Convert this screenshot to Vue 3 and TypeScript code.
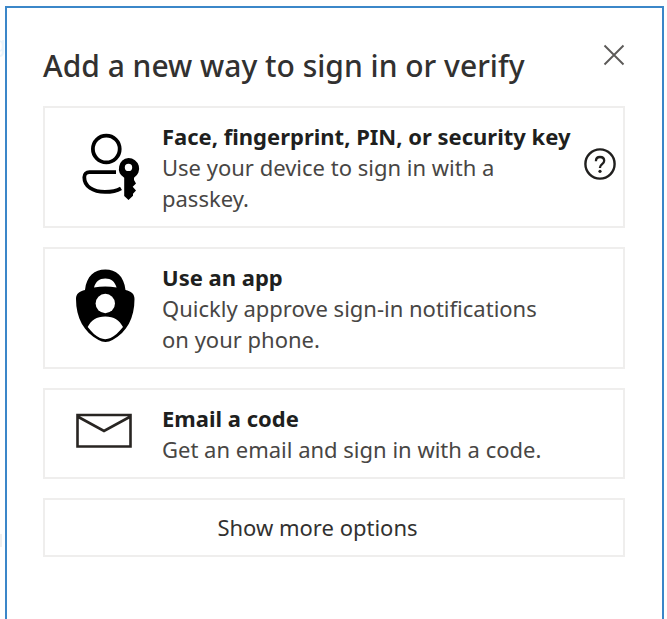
<script setup lang="ts">
import { ref } from 'vue'

type IconName = 'passkey' | 'authenticator' | 'mail'

interface Method {
  icon: IconName
  title: string
  description: string
  help?: boolean
}

const methods: Method[] = [
  {
    icon: 'passkey',
    title: 'Face, fingerprint, PIN, or security key',
    description: 'Use your device to sign in with a passkey.',
    help: true,
  },
  {
    icon: 'authenticator',
    title: 'Use an app',
    description: 'Quickly approve sign-in notifications on your phone.',
  },
  {
    icon: 'mail',
    title: 'Email a code',
    description: 'Get an email and sign in with a code.',
  },
]

const selected = ref<IconName | null>(null)
</script>

<template>
  <div class="page">
    <span class="behind behind-text" aria-hidden="true">g</span>
    <span class="behind behind-bar" aria-hidden="true"></span>
    <main class="dialog" role="dialog" aria-labelledby="dialog-title">
      <header class="header">
        <h1 id="dialog-title">Add a new way to sign in or verify</h1>
        <button class="close" type="button" aria-label="Close">
          <svg width="22" height="22" viewBox="0 0 22 22">
            <path d="M1.5 1.5 20.5 20.5M20.5 1.5 1.5 20.5" fill="none" stroke="#5c5a58" stroke-width="1.9" />
          </svg>
        </button>
      </header>

      <ul class="methods">
        <li v-for="m in methods" :key="m.icon" class="card">
          <button class="method" type="button" @click="selected = m.icon">
            <span class="icon">
              <svg v-if="m.icon === 'passkey'" width="80" height="85" viewBox="-5 0 80 85">
                <g fill="none" stroke="#000" stroke-width="3.8">
                  <circle cx="36.3" cy="24" r="13.4" />
                  <path d="M46 47.1H19.5C16.2 47.1 14.3 49.2 14.3 52.2C14.3 61.5 23 66.900 35 66.900C41.5 66.900 47 65.700 51 63.300" />
                </g>
                <path
                  fill="#000"
                  fill-rule="evenodd"
                  d="M58.500 33A10.600 10.600 0 0 1 64 52.700V55L66 58.500L62.700 61.800L66 65.500L63 68.800V70.800L58.500 75L54.200 71V52.700A10.600 10.600 0 0 1 58.500 33ZM58.500 38.700A3.700 3.700 0 1 0 58.500 46.100A3.700 3.700 0 1 0 58.500 38.700Z"
                />
              </svg>
              <svg v-else-if="m.icon === 'authenticator'" width="80" height="96" viewBox="0 0 80 96">
                <path
                  fill="#000"
                  d="M40.300 8.500C51 8.500 59 15 60.500 29C66 30.500 69.500 32.300 69.500 38C69.500 57 62 71 47.500 79C43 81.500 38 81.500 33.500 79C19 71 11 57 11 38C11 32.300 14.500 30.500 20 29C21.500 15 29.500 8.500 40.300 8.500Z"
                />
                <path fill="#fff" d="M29 26.500C30.500 20.700 34.500 17.500 40.300 17.500S50 20.700 51.600 26.500C44 25 36.500 25 29 26.500Z" />
                <circle cx="40.300" cy="42.500" r="9.700" fill="#fff" />
                <path fill="#fff" d="M22.700 66C26 59.500 31.500 55.500 40.300 55.500S54.500 59.500 58 66C53.500 71.500 49.500 75.300 45.500 77C42 78.500 38.500 78.500 35 77C31 75.300 27 71.500 22.700 66Z" />
              </svg>
              <svg v-else width="80" height="66" viewBox="0 0 80 66">
                <path d="M12.500 14H65.500V45.500H12.500ZM12.500 15.500 39 30 65.500 15.500" fill="none" stroke="#282522" stroke-width="2.600" />
              </svg>
            </span>
            <span class="text">
              <strong>{{ m.title }}</strong>
              <span class="description">{{ m.description }}</span>
            </span>
          </button>
          <button v-if="m.help" class="help" type="button" aria-label="Learn more about passkeys">
            <svg width="34" height="34" viewBox="0 0 34 34">
              <circle cx="17" cy="17" r="14.600" fill="none" stroke="#201f1e" stroke-width="2.400" />
              <path d="M12.900 14.300C12.900 11.500 14.600 10 17 10S21.200 11.500 21.200 13.800C21.200 17 17 17.200 17 20.500V21" fill="none" stroke="#201f1e" stroke-width="2.300" />
              <circle cx="17" cy="24.300" r="1.600" fill="#201f1e" />
            </svg>
          </button>
        </li>
      </ul>

      <button class="more" type="button">Show more options</button>
    </main>
  </div>
</template>

<style>
body {
  margin: 0;
  background: #fff;
}
</style>

<style scoped>
.page {
  position: relative;
  box-sizing: border-box;
  min-height: 100vh;
  padding: 6px 3px 0 5px;
  overflow: hidden;
  background: #fefefe;
  color: #323130;
  font-family: 'Segoe UI', 'Noto Sans', 'Open Sans', sans-serif;
}

.behind {
  position: absolute;
  left: 0;
}

.behind-text {
  top: 28px;
  left: -8px;
  color: #e8f3fb;
  font-size: 22px;
}

.behind-bar {
  top: 534px;
  width: 2px;
  height: 13px;
  background: #eeeeee;
}

.dialog {
  position: relative;
  box-sizing: border-box;
  min-height: calc(100vh - 6px);
  padding: 36px 37px 48px 36px;
  border: 2px solid #3a86c8;
  border-bottom: 0;
  background: #fff;
}

.header {
  display: flex;
  align-items: flex-start;
  justify-content: space-between;
  margin-bottom: 18px;
}

h1 {
  margin: 0;
  font-size: 30px;
  font-weight: 500;
  line-height: 44px;
  white-space: nowrap;
}

button {
  margin: 0;
  padding: 0;
  border: 0;
  background: none;
  color: inherit;
  font: inherit;
  cursor: pointer;
}

.close svg,
.help svg,
.icon svg {
  display: block;
}

.methods {
  display: grid;
  gap: 19px;
  margin: 0 0 19px;
  padding: 0;
  list-style: none;
}

.card {
  display: flex;
  align-items: center;
  border: 2px solid #efeeed;
}

.method {
  display: flex;
  flex: 1;
  align-items: center;
  min-width: 0;
  padding: 13px 0 12px 20px;
  text-align: left;
}

.icon {
  flex: none;
  margin: -8px 17px -8px 0;
}

.text {
  display: block;
  max-width: 400px;
  font-size: 22px;
  line-height: 31px;
}

strong {
  display: block;
  color: #201f1e;
  font-weight: 700;
  white-space: nowrap;
}

.description {
  display: block;
  color: #484644;
}

.help {
  margin: 0 6px 6px 0;
}

.more {
  width: 100%;
  padding: 12px 33px 12px 0;
  border: 2px solid #efeeed;
  font-size: 22px;
  line-height: 31px;
}
</style>
